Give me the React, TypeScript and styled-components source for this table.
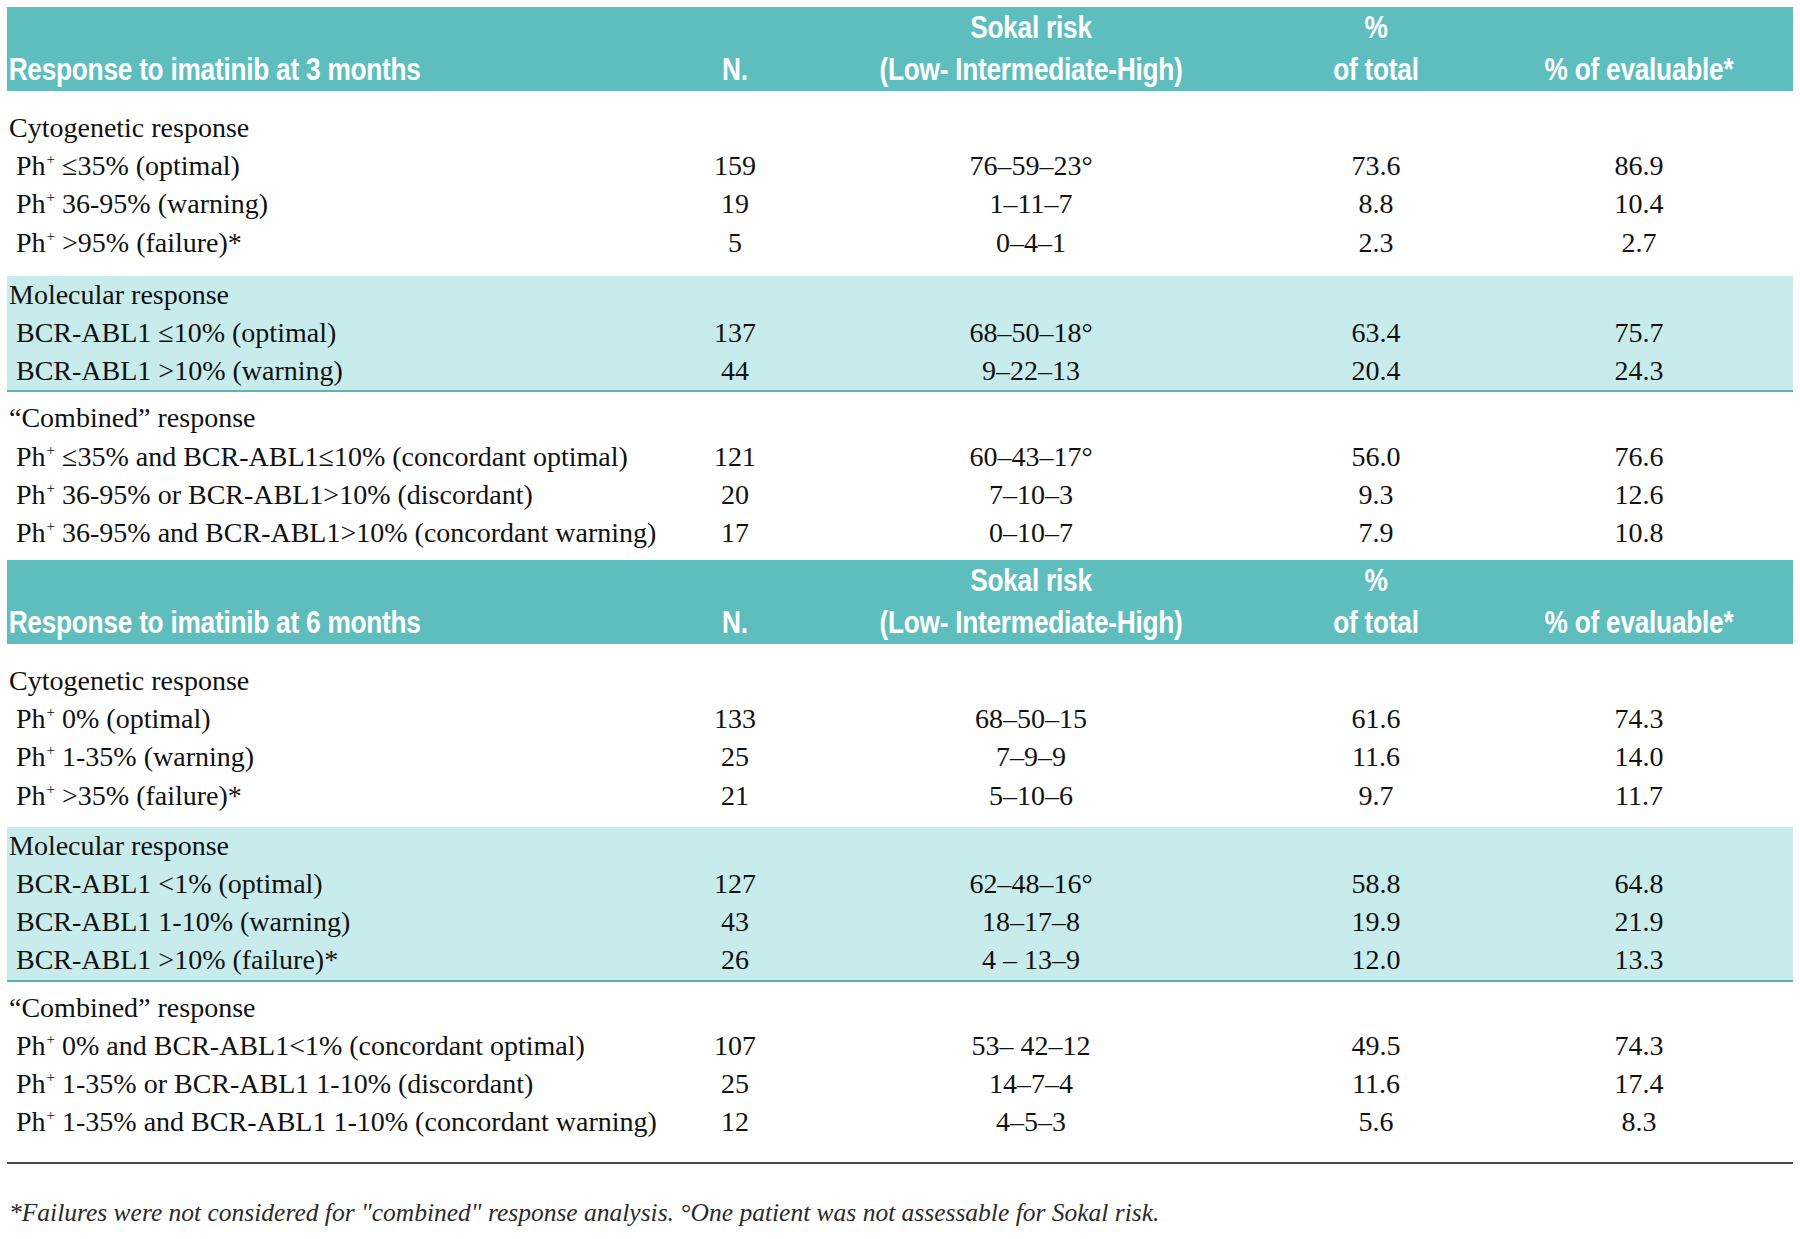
import React from "react";
import styled, { createGlobalStyle } from "styled-components";

const COLS = "653px 150px 442px 248px 278px";

const GlobalStyle = createGlobalStyle`
  body {
    margin: 0;
    background: #ffffff;
  }
`;

const Page = styled.div`
  padding: 7px 0 0 7px;
  width: 1786px;
`;

const HeaderRow = styled.div`
  box-sizing: border-box;
  display: grid;
  grid-template-columns: ${COLS};
  align-items: end;
  height: 84px;
  padding-bottom: 9px;
  background: #5ebebe;
  color: #ffffff;
  font-family: "Liberation Sans", Arial, sans-serif;
  font-weight: 700;
  font-size: 32px;
  line-height: 41.5px;
`;

// header face in the print is a heavy condensed grotesque, so squeeze it
const HeadCell = styled.div<{ $left?: boolean }>`
  text-align: ${(p) => (p.$left ? "left" : "center")};
  padding-left: ${(p) => (p.$left ? "2px" : "0")};
  white-space: nowrap;
  transform: scaleX(0.82);
  transform-origin: ${(p) => (p.$left ? "left" : "center")} bottom;
  letter-spacing: -0.3px;
`;

const Section = styled.div<{ $tint?: boolean; $pt: number; $pb: number }>`
  background: ${(p) => (p.$tint ? "#c8ebeb" : "transparent")};
  border-bottom: ${(p) => (p.$tint ? "2px solid #5cb3b3" : "none")};
  padding: ${(p) => `${p.$pt}px 0 ${p.$pb}px 0`};
`;

const Row = styled.div`
  display: grid;
  grid-template-columns: ${COLS};
  height: 38.2px;
  line-height: 38.2px;
  font-family: "Liberation Serif", "Times New Roman", serif;
  font-size: 28px;
  color: #111111;
  white-space: nowrap;
`;

const Label = styled.div<{ $title?: boolean }>`
  padding-left: ${(p) => (p.$title ? "2px" : "9px")};
`;

const Num = styled.div`
  text-align: center;
`;

const Sup = styled.sup`
  font-size: 15px;
  line-height: 0;
  vertical-align: 11px;
  margin-left: 1px;
`;

const Rule = styled.div`
  height: 2px;
  background: #4a4a4a;
`;

const Footnote = styled.p`
  margin: 34px 0 0 2px;
  font-family: "Liberation Serif", "Times New Roman", serif;
  font-style: italic;
  font-size: 25.5px;
  line-height: 30px;
  color: #2a2a2a;
`;

type Item = {
  label: React.ReactNode;
  n: string;
  sokal: string;
  total: string;
  evaluable: string;
};

type Group = {
  title: string;
  tint?: boolean;
  pt: number;
  pb: number;
  items: Item[];
};

const Ph = () => (
  <>
    Ph<Sup>+</Sup>
  </>
);

const threeMonths: Group[] = [
  {
    title: "Cytogenetic response",
    pt: 18,
    pb: 14,
    items: [
      { label: <><Ph /> ≤35% (optimal)</>, n: "159", sokal: "76–59–23°", total: "73.6", evaluable: "86.9" },
      { label: <><Ph /> 36-95% (warning)</>, n: "19", sokal: "1–11–7", total: "8.8", evaluable: "10.4" },
      { label: <><Ph /> &gt;95% (failure)*</>, n: "5", sokal: "0–4–1", total: "2.3", evaluable: "2.7" },
    ],
  },
  {
    title: "Molecular response",
    tint: true,
    pt: 0,
    pb: 0,
    items: [
      { label: "BCR-ABL1 ≤10% (optimal)", n: "137", sokal: "68–50–18°", total: "63.4", evaluable: "75.7" },
      { label: "BCR-ABL1 >10% (warning)", n: "44", sokal: "9–22–13", total: "20.4", evaluable: "24.3" },
    ],
  },
  {
    title: "“Combined” response",
    pt: 7,
    pb: 8,
    items: [
      { label: <><Ph /> ≤35% and BCR-ABL1≤10% (concordant optimal)</>, n: "121", sokal: "60–43–17°", total: "56.0", evaluable: "76.6" },
      { label: <><Ph /> 36-95% or BCR-ABL1&gt;10% (discordant)</>, n: "20", sokal: "7–10–3", total: "9.3", evaluable: "12.6" },
      { label: <><Ph /> 36-95% and BCR-ABL1&gt;10% (concordant warning)</>, n: "17", sokal: "0–10–7", total: "7.9", evaluable: "10.8" },
    ],
  },
];

const sixMonths: Group[] = [
  {
    title: "Cytogenetic response",
    pt: 18,
    pb: 12,
    items: [
      { label: <><Ph /> 0% (optimal)</>, n: "133", sokal: "68–50–15", total: "61.6", evaluable: "74.3" },
      { label: <><Ph /> 1-35% (warning)</>, n: "25", sokal: "7–9–9", total: "11.6", evaluable: "14.0" },
      { label: <><Ph /> &gt;35% (failure)*</>, n: "21", sokal: "5–10–6", total: "9.7", evaluable: "11.7" },
    ],
  },
  {
    title: "Molecular response",
    tint: true,
    pt: 0,
    pb: 0,
    items: [
      { label: "BCR-ABL1 <1% (optimal)", n: "127", sokal: "62–48–16°", total: "58.8", evaluable: "64.8" },
      { label: "BCR-ABL1 1-10% (warning)", n: "43", sokal: "18–17–8", total: "19.9", evaluable: "21.9" },
      { label: "BCR-ABL1 >10% (failure)*", n: "26", sokal: "4 – 13–9", total: "12.0", evaluable: "13.3" },
    ],
  },
  {
    title: "“Combined” response",
    pt: 7,
    pb: 21,
    items: [
      { label: <><Ph /> 0% and BCR-ABL1&lt;1% (concordant optimal)</>, n: "107", sokal: "53– 42–12", total: "49.5", evaluable: "74.3" },
      { label: <><Ph /> 1-35% or BCR-ABL1 1-10% (discordant)</>, n: "25", sokal: "14–7–4", total: "11.6", evaluable: "17.4" },
      { label: <><Ph /> 1-35% and BCR-ABL1 1-10% (concordant warning)</>, n: "12", sokal: "4–5–3", total: "5.6", evaluable: "8.3" },
    ],
  },
];

const Header = ({ months }: { months: number }) => (
  <HeaderRow>
    <HeadCell $left>Response to imatinib at {months} months</HeadCell>
    <HeadCell>N.</HeadCell>
    <HeadCell>
      Sokal risk
      <br />
      (Low- Intermediate-High)
    </HeadCell>
    <HeadCell>
      %
      <br />
      of total
    </HeadCell>
    <HeadCell>% of evaluable*</HeadCell>
  </HeaderRow>
);

const GroupBlock = ({ group }: { group: Group }) => (
  <Section $tint={group.tint} $pt={group.pt} $pb={group.pb}>
    <Row>
      <Label $title>{group.title}</Label>
    </Row>
    {group.items.map((it, i) => (
      <Row key={i}>
        <Label>{it.label}</Label>
        <Num>{it.n}</Num>
        <Num>{it.sokal}</Num>
        <Num>{it.total}</Num>
        <Num>{it.evaluable}</Num>
      </Row>
    ))}
  </Section>
);

export default function App() {
  return (
    <Page>
      <GlobalStyle />
      <Header months={3} />
      {threeMonths.map((g, i) => (
        <GroupBlock key={i} group={g} />
      ))}
      <Header months={6} />
      {sixMonths.map((g, i) => (
        <GroupBlock key={i} group={g} />
      ))}
      <Rule />
      <Footnote>
        *Failures were not considered for "combined" response analysis. °One patient was not assessable for Sokal risk.
      </Footnote>
    </Page>
  );
}
